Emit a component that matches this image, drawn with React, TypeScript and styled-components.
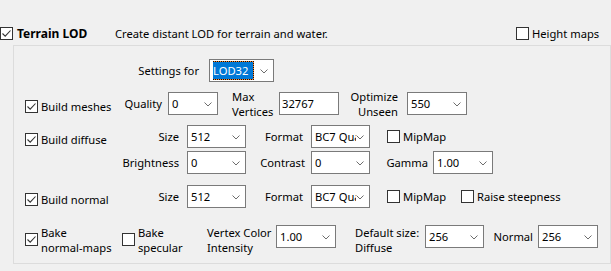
import React from "react";
import styled, { createGlobalStyle } from "styled-components";

const Global = createGlobalStyle`
  html, body { margin: 0; padding: 0; background: #f0f0f0; }
  body {
    font-family: "Noto Sans", "Open Sans", sans-serif;
    font-size: 11.2px;
    color: #000;
  }
  * { box-sizing: border-box; }
`;

const Page = styled.div`
  width: 611px;
  height: 271px;
  overflow: hidden;
  background: #f0f0f0;
  padding-top: 27px;
`;

const Header = styled.div`
  display: flex;
  align-items: center;
  height: 13px;
  padding-right: 11px;
`;

const Title = styled.span`
  font-weight: 700;
  font-size: 12px;
`;

const Description = styled.span`
  flex: 1;
  white-space: nowrap;
`;

const Panel = styled.div`
  margin: 5px 0 0 13px;
  width: 598px;
  height: 219px;
  border: 1px solid #dcdcdc;
  padding: 13px 0 0 11px;
  display: flex;
  flex-direction: column;
`;

const Row = styled.div<{ $mt?: number }>`
  display: flex;
  align-items: center;
  height: 23px;
  margin-top: ${p => p.$mt ?? 0}px;
`;

const CheckItem = styled.label<{ $w?: number; $ml?: number; $dy?: number; $gap?: number }>`
  display: flex;
  align-items: center;
  gap: ${p => p.$gap ?? 3}px;
  flex: none;
  width: ${p => (p.$w ? `${p.$w}px` : "auto")};
  margin-left: ${p => p.$ml ?? 0}px;
  margin-top: ${p => (p.$dy ?? 0) * 2}px;
  line-height: 15px;
  white-space: nowrap;
`;

const Box = styled.span`
  width: 13px;
  height: 13px;
  flex: none;
  border: 1px solid #333;
  background: #fff;
  display: flex;
  align-items: center;
  justify-content: center;
`;

const Label = styled.div<{ $w: number; $align?: "left" | "right"; $pr?: number; $ml?: number; $dy?: number }>`
  flex: none;
  width: ${p => p.$w}px;
  text-align: ${p => p.$align ?? "right"};
  padding-right: ${p => p.$pr ?? 0}px;
  margin-left: ${p => p.$ml ?? 0}px;
  margin-top: ${p => (p.$dy ?? 0) * 2}px;
  line-height: 15px;
  white-space: nowrap;
`;

const Field = styled.div<{ $w: number; $pl?: number }>`
  flex: none;
  width: ${p => p.$w}px;
  height: 23px;
  border: 1px solid #7a7a7a;
  background: #fff;
  display: flex;
  align-items: center;
  justify-content: space-between;
  padding: 0 5px 0 ${p => p.$pl ?? 3}px;
  white-space: nowrap;
  overflow: hidden;
`;

const FieldText = styled.span`
  overflow: hidden;
  flex: 1;
  min-width: 0;
`;

const Selected = styled.span`
  display: inline-flex;
  align-items: center;
  height: 19px;
  width: 43px;
  margin-left: -2px;
  padding-left: 1px;
  color: #fff;
  border: 1px dotted #111;
  background: linear-gradient(#0078d7, #0078d7) padding-box, linear-gradient(#ff8728, #ff8728) border-box;
`;

const ChevronSvg = styled.svg`
  flex: none;
  margin-top: 2px;
`;

const Chevron = () => (
  <ChevronSvg width="8" height="5" viewBox="0 0 8 5">
    <polyline points="0.5,0.5 4,4 7.5,0.5" fill="none" stroke="#6d6d6d" strokeWidth="1" />
  </ChevronSvg>
);

const CheckMark = () => (
  <svg width="11" height="11" viewBox="0 0 11 11">
    <polyline points="1.5,5.5 4.2,8.2 9.5,2.5" fill="none" stroke="#333" strokeWidth="1.1" />
  </svg>
);

type CheckProps = {
  checked?: boolean;
  w?: number;
  ml?: number;
  dy?: number;
  gap?: number;
  children: React.ReactNode;
};

const Check = ({ checked, w, ml, dy, gap, children }: CheckProps) => (
  <CheckItem $w={w} $ml={ml} $dy={dy} $gap={gap}>
    <Box>{checked && <CheckMark />}</Box>
    <span>{children}</span>
  </CheckItem>
);

const Combo = ({ w, value, selected }: { w: number; value: string; selected?: boolean }) => (
  <Field $w={w}>
    <FieldText>{selected ? <Selected>{value}</Selected> : value}</FieldText>
    <Chevron />
  </Field>
);

const TextBox = ({ w, value }: { w: number; value: string }) => (
  <Field $w={w} $pl={2}>
    <FieldText>{value}</FieldText>
  </Field>
);

export default function App() {
  return (
    <>
      <Global />
      <Page>
        <Header>
          <Check checked w={115} gap={4}>
            <Title>Terrain LOD</Title>
          </Check>
          <Description>Create distant LOD for terrain and water.</Description>
          <Check w={84}>Height maps</Check>
        </Header>
        <Panel>
          <Row>
            <Label $w={184} $pr={10}>Settings for</Label>
            <Combo w={65} value="LOD32" selected />
          </Row>
          <Row $mt={10}>
            <Check checked w={99} dy={2.5}>Build meshes</Check>
            <Label $w={44} $pr={6}>Quality</Label>
            <Combo w={50} value="0" />
            <Label $w={47} $ml={14} $align="left">
              Max
              <br />
              Vertices
            </Label>
            <TextBox w={60} value="32767" />
            <Label $w={68} $pr={9}>
              Optimize
              <br />
              Unseen
            </Label>
            <Combo w={60} value="550" />
          </Row>
          <Row $mt={10}>
            <Check checked w={120} dy={2.5}>Build diffuse</Check>
            <Label $w={42} $pr={8}>Size</Label>
            <Combo w={59} value="512" />
            <Label $w={65} $pr={8}>Format</Label>
            <Combo w={59} value="BC7 Quality" />
            <Check ml={17}>MipMap</Check>
          </Row>
          <Row $mt={3}>
            <Label $w={162} $pr={8}>Brightness</Label>
            <Combo w={59} value="0" />
            <Label $w={65} $pr={6}>Contrast</Label>
            <Combo w={59} value="0" />
            <Label $w={63} $pr={5}>Gamma</Label>
            <Combo w={60} value="1.00" />
          </Row>
          <Row $mt={11}>
            <Check checked w={120} dy={2.5}>Build normal</Check>
            <Label $w={42} $pr={8}>Size</Label>
            <Combo w={59} value="512" />
            <Label $w={65} $pr={8}>Format</Label>
            <Combo w={59} value="BC7 Quality" />
            <Check ml={17} w={74}>MipMap</Check>
            <Check>Raise steepness</Check>
          </Row>
          <Row $mt={17}>
            <Check checked w={97} dy={3}>
              Bake
              <br />
              normal-maps
            </Check>
            <Check w={85} dy={3}>
              Bake
              <br />
              specular
            </Check>
            <Label $w={69} $align="left" $dy={3}>
              Vertex Color
              <br />
              Intensity
            </Label>
            <Combo w={60} value="1.00" />
            <Label $w={70} $ml={19} $align="left" $dy={3}>
              Default size:
              <br />
              Diffuse
            </Label>
            <Combo w={59} value="256" />
            <Label $w={54} $pr={5}>Normal</Label>
            <Combo w={60} value="256" />
          </Row>
        </Panel>
      </Page>
    </>
  );
}
